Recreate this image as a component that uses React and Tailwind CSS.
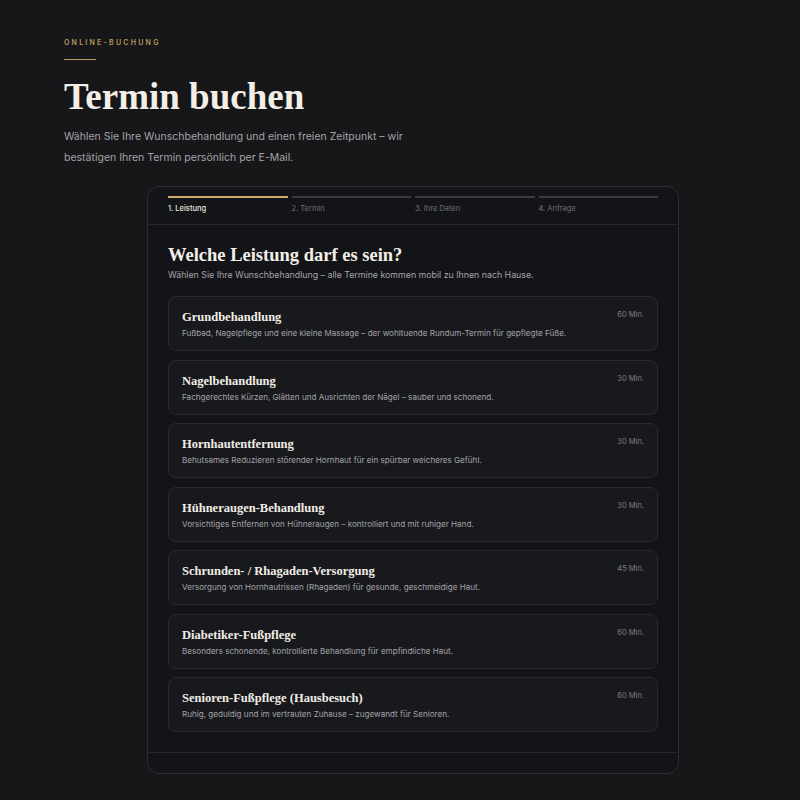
const services = [
  { title: 'Grundbehandlung', text: 'Fußbad, Nagelpflege und eine kleine Massage – der wohltuende Rundum-Termin für gepflegte Füße.', dur: '60 Min.' },
  { title: 'Nagelbehandlung', text: 'Fachgerechtes Kürzen, Glätten und Ausrichten der Nägel – sauber und schonend.', dur: '30 Min.' },
  { title: 'Hornhautentfernung', text: 'Behutsames Reduzieren störender Hornhaut für ein spürbar weicheres Gefühl.', dur: '30 Min.' },
  { title: 'Hühneraugen-Behandlung', text: 'Vorsichtiges Entfernen von Hühneraugen – kontrolliert und mit ruhiger Hand.', dur: '30 Min.' },
  { title: 'Schrunden- / Rhagaden-Versorgung', text: 'Versorgung von Hornhautrissen (Rhagaden) für gesunde, geschmeidige Haut.', dur: '45 Min.' },
  { title: 'Diabetiker-Fußpflege', text: 'Besonders schonende, kontrollierte Behandlung für empfindliche Haut.', dur: '60 Min.' },
  { title: 'Senioren-Fußpflege (Hausbesuch)', text: 'Ruhig, geduldig und im vertrauten Zuhause – zugewandt für Senioren.', dur: '60 Min.' },
];

const steps = ['1. Leistung', '2. Termin', '3. Ihre Daten', '4. Anfrage'];

const serif = { fontFamily: '"Liberation Serif", "DejaVu Serif", serif' };

export default function App() {
  return (
    <div className="min-h-screen bg-[#17171a] text-white" style={{ fontFamily: 'Inter, "Noto Sans", sans-serif' }}>
      <div className="px-16 pt-[39px]">
        {/* Kopf */}
        <p className="text-[7px] font-semibold tracking-[0.32em] text-[#b8975e] leading-none">ONLINE-BUCHUNG</p>
        <div className="mt-[13px] h-px w-8 bg-[#b8975e]" />
        <h1 className="mt-[18px] text-[37px] font-bold leading-none text-[#f3efe7]" style={serif}>Termin buchen</h1>
        <p className="mt-[11px] max-w-[360px] text-[10.5px] leading-[21px] text-[#a3a3a8]">
          Wählen Sie Ihre Wunschbehandlung und einen freien Zeitpunkt – wir bestätigen Ihren Termin persönlich per E-Mail.
        </p>
      </div>

      {/* Buchungskarte */}
      <div className="ml-[147px] mt-[18px] w-[532px] rounded-xl border border-[#2c2d31] bg-[#131418]">
        <div className="border-b border-[#26272b] px-[20px] pt-[9px] pb-[10px]">
          <div className="grid grid-cols-4 gap-1">
            {steps.map((s, i) => (
              <div key={s}>
                <div className={`h-[2px] ${i === 0 ? 'bg-[#c9a96e]' : 'bg-[#3a3b40]'}`} />
                <p className={`mt-[6px] text-[7.5px] leading-[10px] ${i === 0 ? 'font-medium text-[#e8e6e1]' : 'text-[#6f7076]'}`}>{s}</p>
              </div>
            ))}
          </div>
        </div>

        <div className="px-[20px] pt-[20px] pb-[20px]">
          <h2 className="text-[18.5px] font-bold leading-[20px] text-[#f3efe7]" style={serif}>Welche Leistung darf es sein?</h2>
          <p className="mt-[4px] text-[8.8px] leading-[12px] text-[#a3a3a8]">
            Wählen Sie Ihre Wunschbehandlung – alle Termine kommen mobil zu Ihnen nach Hause.
          </p>

          <div className="mt-[15px] flex flex-col gap-[8.5px]">
            {services.map((s) => (
              <div key={s.title} className="flex h-[55px] justify-between rounded-lg border border-[#2a2b30] bg-[#18191d] px-[13px] pt-[13px]">
                <div>
                  <p className="text-[12.5px] font-bold leading-[14px] text-[#f1ede5]" style={serif}>{s.title}</p>
                  <p className="mt-[4px] text-[8.1px] leading-[11px] text-[#a3a3a8]">{s.text}</p>
                </div>
                <span className="text-[7.5px] leading-[10px] text-[#7d7e84]">{s.dur}</span>
              </div>
            ))}
          </div>
        </div>

        <div className="h-[21px] border-t border-[#26272b]" />
      </div>
      <div className="h-[27px]" />
    </div>
  );
}
